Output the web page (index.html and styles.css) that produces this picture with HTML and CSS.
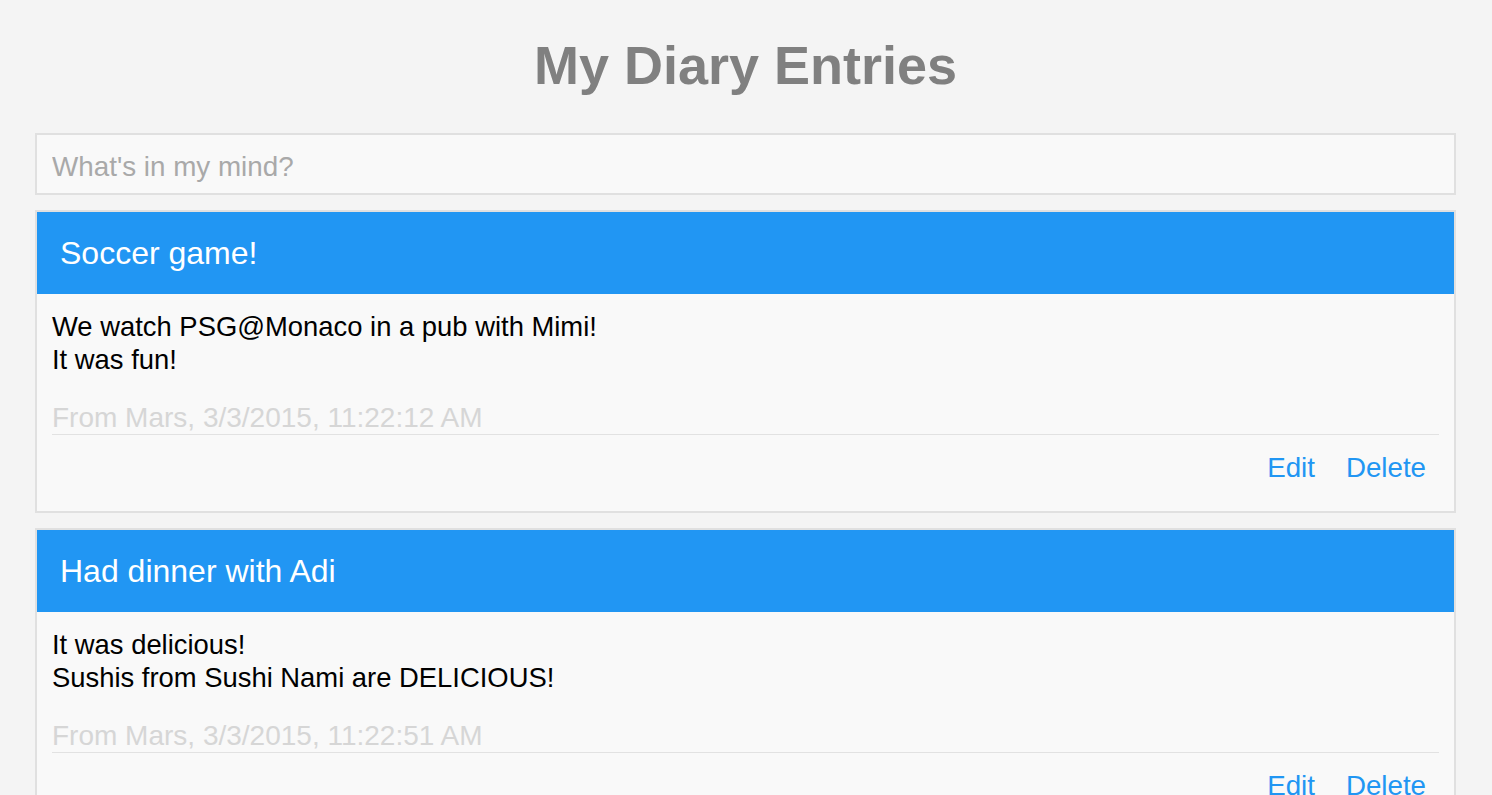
FILE: index.html
```html
<!DOCTYPE html>
<html lang="en">
<head>
<meta charset="utf-8">
<title>My Diary Entries</title>
<link rel="stylesheet" href="styles.css">
</head>
<body>
<div class="app">
  <h1 class="title">My Diary Entries</h1>
  <input class="new-entry" type="text" placeholder="What's in my mind?">
  <div class="entry">
    <div class="entry-header">Soccer game!</div>
    <div class="entry-body">
      <p class="entry-text">We watch PSG@Monaco in a pub with Mimi!<br>It was fun!</p>
      <div class="entry-meta">From Mars, 3/3/2015, 11:22:12 AM</div>
      <div class="entry-actions">
        <a class="action">Edit</a>
        <a class="action">Delete</a>
      </div>
    </div>
  </div>
  <div class="entry">
    <div class="entry-header">Had dinner with Adi</div>
    <div class="entry-body">
      <p class="entry-text">It was delicious!<br>Sushis from Sushi Nami are DELICIOUS!</p>
      <div class="entry-meta">From Mars, 3/3/2015, 11:22:51 AM</div>
      <div class="entry-actions">
        <a class="action">Edit</a>
        <a class="action">Delete</a>
      </div>
    </div>
  </div>
</div>
</body>
</html>
```

FILE: styles.css
```css
html, body {
  margin: 0;
  padding: 0;
  background: #f4f4f4;
  font-family: "Liberation Sans", Arial, Helvetica, sans-serif;
}

.app {
  padding: 0 36px 0 35px;
}

.title {
  margin: 34px 0 37px;
  font-size: 54px;
  line-height: 62px;
  font-weight: bold;
  color: #808080;
  text-align: center;
}

.new-entry {
  display: block;
  box-sizing: border-box;
  width: 100%;
  height: 62px;
  margin: 0 0 15px;
  padding: 5px 15px 0;
  border: 2px solid #e0e0e0;
  background: #f9f9f9;
  font-family: inherit;
  font-size: 27.8px;
  color: #333;
  outline: none;
}

.new-entry::placeholder {
  color: #a9a9a9;
}

.entry {
  border: 2px solid #e0e0e0;
  background: #f9f9f9;
  margin-bottom: 15px;
}

.entry-header {
  display: flex;
  align-items: center;
  height: 82px;
  padding: 0 23px;
  background: #2196f3;
  color: #fff;
  font-size: 32px;
}

.entry-body {
  padding: 16px 15px 27px;
  font-size: 27.4px;
  line-height: 33px;
}

.entry-text {
  margin: 0;
  color: #000;
}

.entry-meta {
  margin-top: 25px;
  border-bottom: 1px solid #e2e2e2;
  color: #d6d6d6;
  font-size: 28px;
}

.entry-actions {
  display: flex;
  justify-content: flex-end;
  padding-top: 16px;
  margin-right: -2px;
}

.action {
  padding: 0 15px;
  color: #2196f3;
  font-size: 27.7px;
  cursor: pointer;
}

.action + .action {
  padding-left: 16px;
}
```
